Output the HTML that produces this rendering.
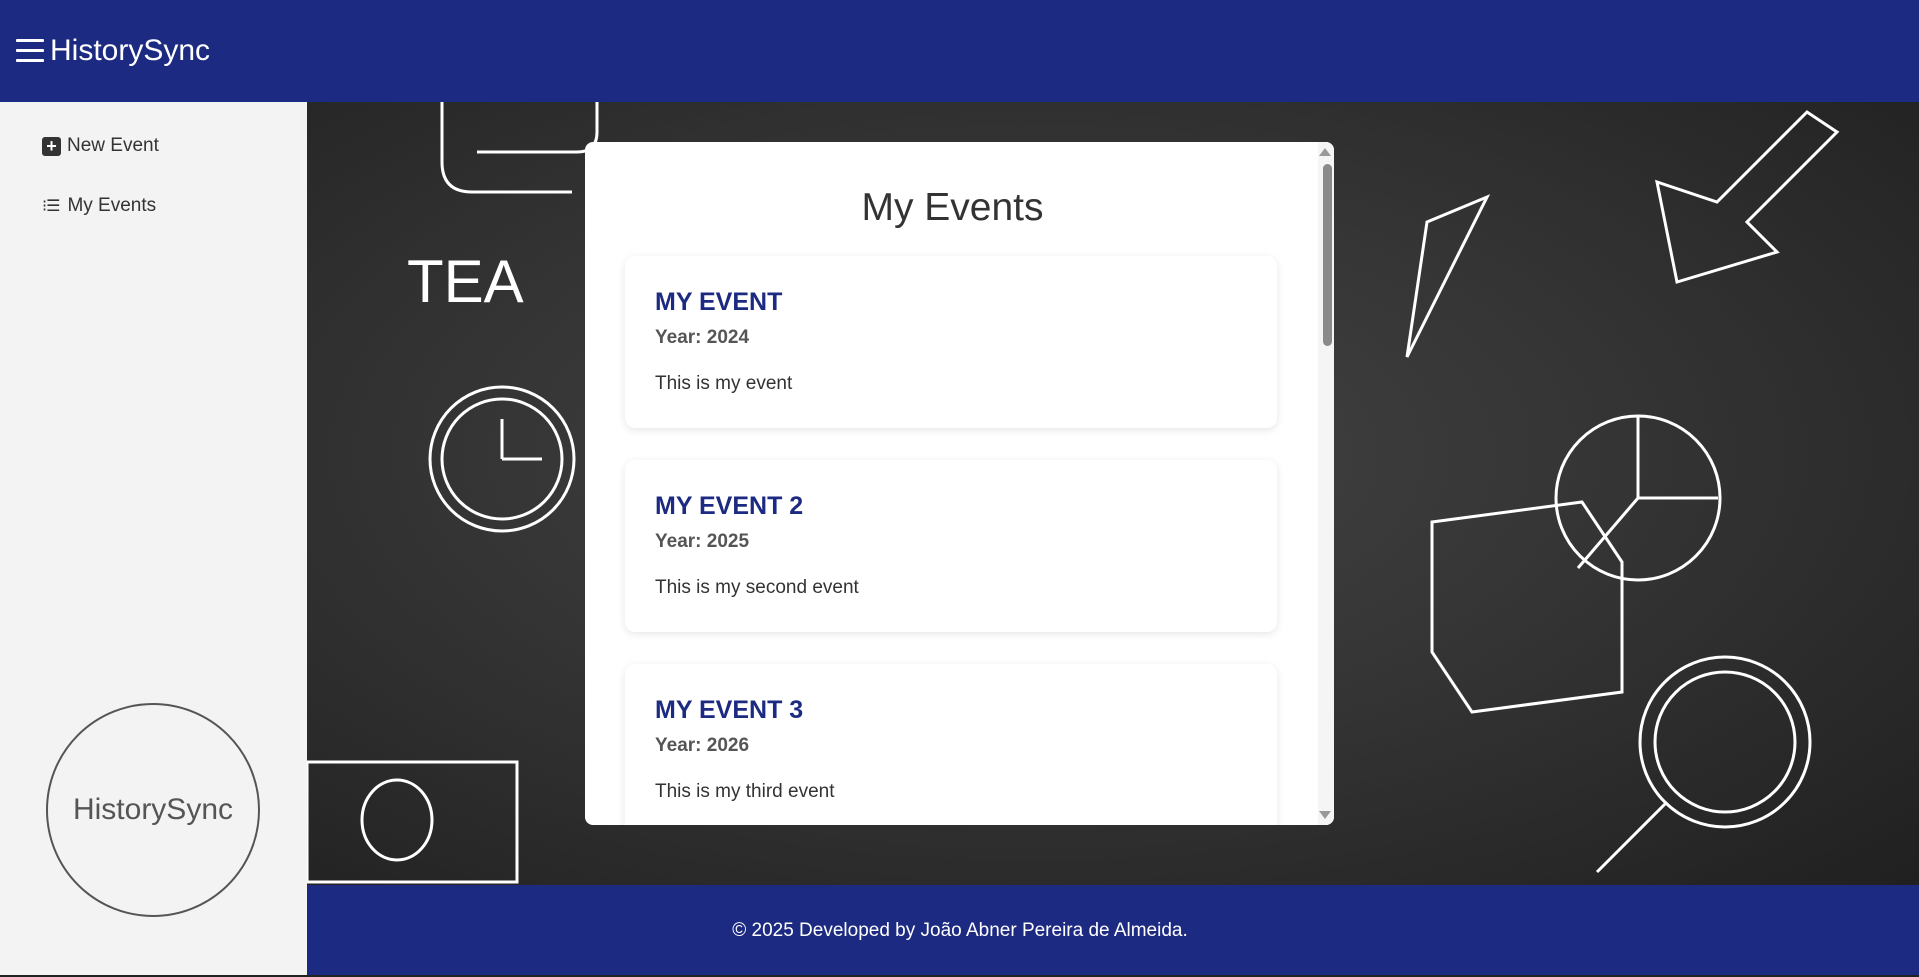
<!DOCTYPE html>
<html><head><meta charset="utf-8"><style>
*{box-sizing:border-box;margin:0;padding:0}
html,body{width:1919px;height:977px;overflow:hidden}
body{font-family:"Liberation Sans","DejaVu Sans",sans-serif;background:#f3f3f3;position:relative}
.hdr{position:absolute;left:0;top:0;width:1919px;height:102px;background:#1d2a82}
.ham{position:absolute;left:16px;top:39px;width:28px}
.ham i{display:block;height:3px;background:#fff;margin-bottom:7px;border-radius:1px}
.brand{position:absolute;left:50px;top:34px;color:#fff;font-size:30px}
.side{position:absolute;left:0;top:102px;width:307px;height:875px;background:#f3f3f3}
.item{position:absolute;left:42px;font-size:19px;color:#333;display:flex;align-items:center}
.plus{width:19px;height:19px;background:#333;border-radius:3px;color:#fff;font-size:18px;line-height:19px;text-align:center;margin-right:6px;font-weight:bold}
.circ{position:absolute;left:46px;top:601px;width:214px;height:214px;border:2px solid #555;border-radius:50%;display:flex;align-items:center;justify-content:center;font-size:30px;color:#555}
.main{position:absolute;left:307px;top:102px;width:1612px;height:783px;background:radial-gradient(ellipse at 45% 45%,#444 0%,#333 50%,#202020 100%);overflow:hidden}
.foot{position:absolute;left:307px;top:885px;width:1612px;height:90px;background:#1d2a82;color:#fff;font-size:19px;text-align:center;line-height:92px;padding-right:306px}
.bl{position:absolute;left:0;top:975px;width:1919px;height:2px;background:#222}
.modal{position:absolute;left:585px;top:142px;width:749px;height:683px;background:#fff;border-radius:8px;overflow:hidden}
.modal h1{position:absolute;left:0;width:735px;top:44px;text-align:center;font-size:39px;font-weight:normal;color:#333}
.card{position:absolute;left:40px;width:652px;height:172px;background:#fff;border-radius:10px;box-shadow:0 2px 8px rgba(0,0,0,.1);padding:30px 30px}
.card h2{font-size:25px;color:#1d2a82;font-weight:bold;margin-top:2px}
.card .y{font-size:19px;color:#555;font-weight:bold;margin-top:10px}
.card p{font-size:19px;color:#333;margin-top:24px}
.sb{position:absolute;right:2px;top:22px;width:9px;height:182px;background:#8a8a8a;border-radius:5px}
.ar{position:absolute;right:3px;width:0;height:0;border-left:6px solid transparent;border-right:6px solid transparent}
</style></head><body>
<div class="hdr"><div class="ham"><i></i><i></i><i></i></div><div class="brand">HistorySync</div></div>
<div class="side">
<div class="item" style="top:33px"><span class="plus">+</span>New Event</div>
<div class="item" style="top:93px"><span style="font-size:16px;margin-right:8px;letter-spacing:-1px">⁝☰</span>My Events</div>
<div class="circ">HistorySync</div>
</div>
<div class="main">
<svg width="1612" height="783" fill="none" stroke="#fff" stroke-width="3">
<circle cx="195" cy="357" r="72"/><circle cx="195" cy="357" r="60"/>
<path d="M195 357v-40M195 357h40"/>
<circle cx="1418" cy="640" r="85"/><circle cx="1418" cy="640" r="70"/><path d="M1360 700l-70 70"/>
<circle cx="1331" cy="396" r="82"/><path d="M1331 314v82l80 0M1331 396l-60 70"/>
<path d="M0 660h210v120H0z"/><ellipse cx="90" cy="718" rx="35" ry="40"/>
<path d="M1120 120l60 -25l-80 160zM1500 10l-90 90l-60 -20l20 100l100 -30l-30 -30l90 -90z"/>
<path d="M1125 420l150 -20l40 60l0 130l-150 20l-40 -60z"/>
<text x="100" y="200" fill="#fff" stroke="none" font-size="60" font-family="Liberation Sans">TEA</text>
<path d="M135 0v60q0 30 30 30h100M290 0v30q0 20 -20 20h-100"/>
</svg>
</div>
<div class="modal">
<h1>My Events</h1>
<div class="card" style="top:114px"><h2>MY EVENT</h2><div class="y">Year: 2024</div><p>This is my event</p></div>
<div class="card" style="top:318px"><h2>MY EVENT 2</h2><div class="y">Year: 2025</div><p>This is my second event</p></div>
<div class="card" style="top:522px"><h2>MY EVENT 3</h2><div class="y">Year: 2026</div><p>This is my third event</p></div>
<div style="position:absolute;right:0;top:0;width:16px;height:683px;background:#f5f5f5"></div>
<div class="sb"></div>
<div class="ar" style="top:6px;border-bottom:8px solid #999"></div>
<div class="ar" style="bottom:6px;border-top:8px solid #999"></div>
</div>
<div class="foot">© 2025 Developed by João Abner Pereira de Almeida.</div>
<div class="bl"></div>
</body></html>
